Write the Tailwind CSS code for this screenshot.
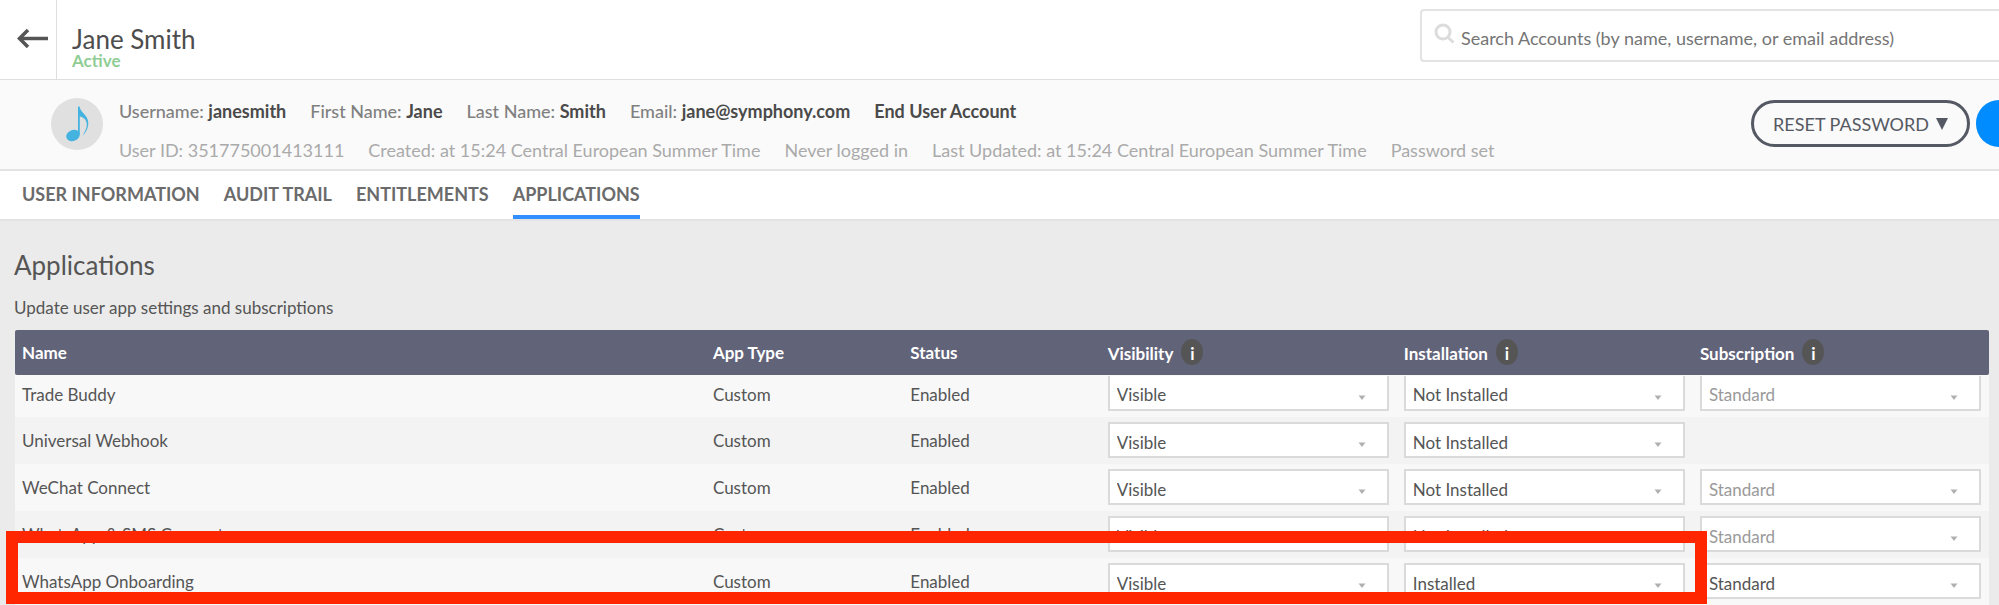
<!DOCTYPE html>
<html lang="en">
<head>
<meta charset="utf-8">
<meta name="viewport" content="width=device-width, initial-scale=1">
<title>Jane Smith – Applications</title>
<script src="https://cdn.jsdelivr.net/npm/@tailwindcss/browser@4"></script>
</head>
<body class="min-h-screen overflow-hidden bg-[#ebebeb] font-['Lato',sans-serif] text-[17px] leading-6 text-[#555]">
<svg class="hidden" aria-hidden="true">
  <symbol id="caret" viewBox="0 0 8 5"><path d="M0.5 0.5H7.5L4 5Z" fill="#b0b0b0"/></symbol>
</svg>

<header class="flex h-20 border-b border-[#dedede] bg-white">
  <button type="button" aria-label="Back" class="flex w-[57px] shrink-0 justify-end border-r border-[#dedede] pt-7 pr-2">
    <svg class="h-[22px] w-[31px]" viewBox="0 0 31 22" fill="none" stroke="#555" stroke-width="3.500"><path d="M31 10.500H3"/><path d="M11 2L2.500 10.500L11 19"/></svg>
  </button>
  <div class="flex-1 pt-[26px] pl-[15px]">
    <h1 class="text-[26px] leading-[26px] text-[#4d4d4d]">Jane Smith</h1>
    <p class="leading-[18px] font-bold text-[#8fcd94]">Active</p>
  </div>
  <label class="mt-[9px] flex h-[53px] w-[579px] shrink-0 items-center rounded-l-sm border-2 border-r-0 border-[#e3e3e3] bg-white pl-3">
    <svg class="mb-1 h-[21px] w-[21px] shrink-0" viewBox="0 0 21 21" fill="none" stroke="#dcdcdc" stroke-width="3"><circle cx="9" cy="9" r="7"/><path d="M14 14.500L19.500 19.500"/></svg>
    <input type="search" aria-label="Search accounts" placeholder="Search Accounts (by name, username, or email address)" class="mt-1 ml-[6px] w-full bg-transparent text-lg outline-none placeholder:text-[#757575]">
  </label>
</header>

<section class="flex h-[91px] border-b-2 border-[#e3e3e3] bg-[#fafafa] pl-[51px]">
  <div class="mt-[18px] h-[52px] w-[52px] shrink-0 rounded-full bg-[#e0e0e0]">
    <svg class="h-[52px] w-[52px]" viewBox="0 0 52 52" fill="#45b3e0"><ellipse cx="22" cy="37.500" rx="7" ry="5.500" transform="rotate(-22 22 37.500)"/><path d="M27 8.500H28.500C29.500 15 37.500 17 37.300 25.500C37.200 30.500 34.500 35 31.500 38C34 33.500 36 30 35.800 26C35.500 21.500 32 19 28.800 18.500V36.500H27Z"/></svg>
  </div>
  <div class="flex-1 pt-[19px] pl-4 text-lg leading-6 whitespace-nowrap">
    <div class="flex gap-6 font-medium text-[#808080]">
      <span>Username: <b class="text-[#4a4a4a]">janesmith</b></span>
      <span>First Name: <b class="text-[#4a4a4a]">Jane</b></span>
      <span>Last Name: <b class="text-[#4a4a4a]">Smith</b></span>
      <span>Email: <b class="text-[#4a4a4a]">jane@symphony.com</b></span>
      <b class="text-[#4a4a4a]">End User Account</b>
    </div>
    <div class="mt-[15px] flex gap-6 text-[#aaa]">
      <span>User ID: 351775001413111</span>
      <span>Created: at 15:24 Central European Summer Time</span>
      <span>Never logged in</span>
      <span>Last Updated: at 15:24 Central European Summer Time</span>
      <span>Password set</span>
    </div>
  </div>
  <div class="flex shrink-0 items-start gap-[6px] pt-5">
    <button type="button" class="flex h-[47px] items-center gap-[7px] rounded-full border-3 border-[#555963] px-[19px] text-lg text-[#555963]">RESET PASSWORD
      <svg class="h-3 w-3" viewBox="0 0 12 12" aria-hidden="true"><path d="M0 0H12L6 12Z" fill="#555963"/></svg>
    </button>
    <button type="button" aria-label="Save" class="h-[47px] w-[23px] rounded-l-full bg-[#008cff]"></button>
  </div>
</section>

<nav class="flex h-[50px] gap-6 border-b-2 border-[#e3e3e3] bg-white px-[22px] text-lg leading-6 font-bold text-[#6b6b6b]">
  <a href="#info" class="pt-[11px]">USER INFORMATION</a>
  <a href="#audit" class="pt-[11px]">AUDIT TRAIL</a>
  <a href="#entitlements" class="pt-[11px]">ENTITLEMENTS</a>
  <a href="#applications" aria-current="page" class="border-b-4 border-[#338fff] pt-[11px]">APPLICATIONS</a>
</nav>

<main class="pr-[10px] pl-[15px]">
  <h2 class="-ml-px pt-7 text-[26px] leading-8">Applications</h2>
  <p class="-ml-px mt-[15px] mb-[10px]">Update user app settings and subscriptions</p>
  <div class="relative">
    <table class="w-full table-fixed border-separate border-spacing-0 text-left">
      <thead>
        <tr class="h-[45px] bg-[#616379] text-white">
          <th class="w-[35%] rounded-l-[2px] pl-[7px]">Name</th>
          <th class="w-[10%] pl-[7px]">App Type</th>
          <th class="w-[10%] pl-[7px]">Status</th>
          <th class="w-[15%] pl-[7px]"><span class="flex items-start gap-2"><span class="pt-[3px]">Visibility</span><button type="button" aria-label="About visibility" class="h-[26px] w-[22px] rounded-[50%] bg-[#555] pt-[3px] leading-[23px]">i</button></span></th>
          <th class="w-[15%] pl-[7px]"><span class="flex items-start gap-2"><span class="pt-[3px]">Installation</span><button type="button" aria-label="About installation" class="h-[26px] w-[22px] rounded-[50%] bg-[#555] pt-[3px] leading-[23px]">i</button></span></th>
          <th class="w-[15%] rounded-r-[2px] pl-[7px]"><span class="flex items-start gap-2"><span class="pt-[3px]">Subscription</span><button type="button" aria-label="About subscription" class="h-[26px] w-[22px] rounded-[50%] bg-[#555] pt-[3px] leading-[23px]">i</button></span></th>
        </tr>
      </thead>
      <tbody>
        <tr class="h-[42px] bg-[#f8f8f8] align-top">
          <td class="pt-2 pl-[7px]">Trade Buddy</td>
          <td class="pt-2 pl-[7px]">Custom</td>
          <td class="pt-2 pl-[7px]">Enabled</td>
          <td class="pt-px pr-2 pl-[7px]"><div class="relative"><select aria-label="Trade Buddy visibility" class="block h-[35px] w-full appearance-none border-2 border-t-0 border-[#dadada] bg-white px-[7px] pt-1"><option>Visible</option></select><svg class="pointer-events-none absolute right-[23px] bottom-[11px] h-[5px] w-2"><use href="#caret"/></svg></div></td>
          <td class="pt-px pr-2 pl-[7px]"><div class="relative"><select aria-label="Trade Buddy installation" class="block h-[35px] w-full appearance-none border-2 border-t-0 border-[#dadada] bg-white px-[7px] pt-1"><option>Not Installed</option></select><svg class="pointer-events-none absolute right-[23px] bottom-[11px] h-[5px] w-2"><use href="#caret"/></svg></div></td>
          <td class="pt-px pr-2 pl-[7px]"><div class="relative"><select aria-label="Trade Buddy subscription" disabled class="block h-[35px] w-full appearance-none border-2 border-t-0 border-[#dadada] bg-white px-[7px] pt-1 text-[#9a9a9a] opacity-100"><option>Standard</option></select><svg class="pointer-events-none absolute right-[23px] bottom-[11px] h-[5px] w-2"><use href="#caret"/></svg></div></td>
        </tr>
        <tr class="h-[47px] bg-[#f3f3f3] align-top">
          <td class="pt-3 pl-[7px]">Universal Webhook</td>
          <td class="pt-3 pl-[7px]">Custom</td>
          <td class="pt-3 pl-[7px]">Enabled</td>
          <td class="pt-[5px] pr-2 pl-[7px]"><div class="relative"><select aria-label="Universal Webhook visibility" class="block h-9 w-full appearance-none border-2 border-[#dadada] bg-white px-[7px] pt-[5px]"><option>Visible</option></select><svg class="pointer-events-none absolute right-[23px] bottom-[11px] h-[5px] w-2"><use href="#caret"/></svg></div></td>
          <td class="pt-[5px] pr-2 pl-[7px]"><div class="relative"><select aria-label="Universal Webhook installation" class="block h-9 w-full appearance-none border-2 border-[#dadada] bg-white px-[7px] pt-[5px]"><option>Not Installed</option></select><svg class="pointer-events-none absolute right-[23px] bottom-[11px] h-[5px] w-2"><use href="#caret"/></svg></div></td>
          <td></td>
        </tr>
        <tr class="h-[47px] bg-[#f8f8f8] align-top">
          <td class="pt-3 pl-[7px]">WeChat Connect</td>
          <td class="pt-3 pl-[7px]">Custom</td>
          <td class="pt-3 pl-[7px]">Enabled</td>
          <td class="pt-[5px] pr-2 pl-[7px]"><div class="relative"><select aria-label="WeChat Connect visibility" class="block h-9 w-full appearance-none border-2 border-[#dadada] bg-white px-[7px] pt-[5px]"><option>Visible</option></select><svg class="pointer-events-none absolute right-[23px] bottom-[11px] h-[5px] w-2"><use href="#caret"/></svg></div></td>
          <td class="pt-[5px] pr-2 pl-[7px]"><div class="relative"><select aria-label="WeChat Connect installation" class="block h-9 w-full appearance-none border-2 border-[#dadada] bg-white px-[7px] pt-[5px]"><option>Not Installed</option></select><svg class="pointer-events-none absolute right-[23px] bottom-[11px] h-[5px] w-2"><use href="#caret"/></svg></div></td>
          <td class="pt-[5px] pr-2 pl-[7px]"><div class="relative"><select aria-label="WeChat Connect subscription" disabled class="block h-9 w-full appearance-none border-2 border-[#dadada] bg-white px-[7px] pt-[5px] text-[#9a9a9a] opacity-100"><option>Standard</option></select><svg class="pointer-events-none absolute right-[23px] bottom-[11px] h-[5px] w-2"><use href="#caret"/></svg></div></td>
        </tr>
        <tr class="h-[47px] bg-[#f3f3f3] align-top">
          <td class="pt-3 pl-[7px]">WhatsApp &amp; SMS Connect</td>
          <td class="pt-3 pl-[7px]">Custom</td>
          <td class="pt-3 pl-[7px]">Enabled</td>
          <td class="pt-[5px] pr-2 pl-[7px]"><div class="relative"><select aria-label="WhatsApp &amp; SMS Connect visibility" class="block h-9 w-full appearance-none border-2 border-[#dadada] bg-white px-[7px] pt-[5px]"><option>Visible</option></select><svg class="pointer-events-none absolute right-[23px] bottom-[11px] h-[5px] w-2"><use href="#caret"/></svg></div></td>
          <td class="pt-[5px] pr-2 pl-[7px]"><div class="relative"><select aria-label="WhatsApp &amp; SMS Connect installation" class="block h-9 w-full appearance-none border-2 border-[#dadada] bg-white px-[7px] pt-[5px]"><option>Not Installed</option></select><svg class="pointer-events-none absolute right-[23px] bottom-[11px] h-[5px] w-2"><use href="#caret"/></svg></div></td>
          <td class="pt-[5px] pr-2 pl-[7px]"><div class="relative"><select aria-label="WhatsApp &amp; SMS Connect subscription" disabled class="block h-9 w-full appearance-none border-2 border-[#dadada] bg-white px-[7px] pt-[5px] text-[#9a9a9a] opacity-100"><option>Standard</option></select><svg class="pointer-events-none absolute right-[23px] bottom-[11px] h-[5px] w-2"><use href="#caret"/></svg></div></td>
        </tr>
        <tr class="h-[47px] bg-[#f8f8f8] align-top">
          <td class="pt-3 pl-[7px]">WhatsApp Onboarding</td>
          <td class="pt-3 pl-[7px]">Custom</td>
          <td class="pt-3 pl-[7px]">Enabled</td>
          <td class="pt-[5px] pr-2 pl-[7px]"><div class="relative"><select aria-label="WhatsApp Onboarding visibility" class="block h-9 w-full appearance-none border-2 border-[#dadada] bg-white px-[7px] pt-[5px]"><option>Visible</option></select><svg class="pointer-events-none absolute right-[23px] bottom-[11px] h-[5px] w-2"><use href="#caret"/></svg></div></td>
          <td class="pt-[5px] pr-2 pl-[7px]"><div class="relative"><select aria-label="WhatsApp Onboarding installation" class="block h-9 w-full appearance-none border-2 border-[#dadada] bg-white px-[7px] pt-[5px]"><option>Installed</option></select><svg class="pointer-events-none absolute right-[23px] bottom-[11px] h-[5px] w-2"><use href="#caret"/></svg></div></td>
          <td class="pt-[5px] pr-2 pl-[7px]"><div class="relative"><select aria-label="WhatsApp Onboarding subscription" class="block h-9 w-full appearance-none border-2 border-[#dadada] bg-white px-[7px] pt-[5px]"><option>Standard</option></select><svg class="pointer-events-none absolute right-[23px] bottom-[11px] h-[5px] w-2"><use href="#caret"/></svg></div></td>
        </tr>
      </tbody>
    </table>
    <!-- highlight around the WhatsApp Onboarding row -->
    <div class="pointer-events-none absolute right-[282px] bottom-px -left-[9px] h-[73px] border-12 border-[#ff2600]"></div>
  </div>
</main>
</body>
</html>
